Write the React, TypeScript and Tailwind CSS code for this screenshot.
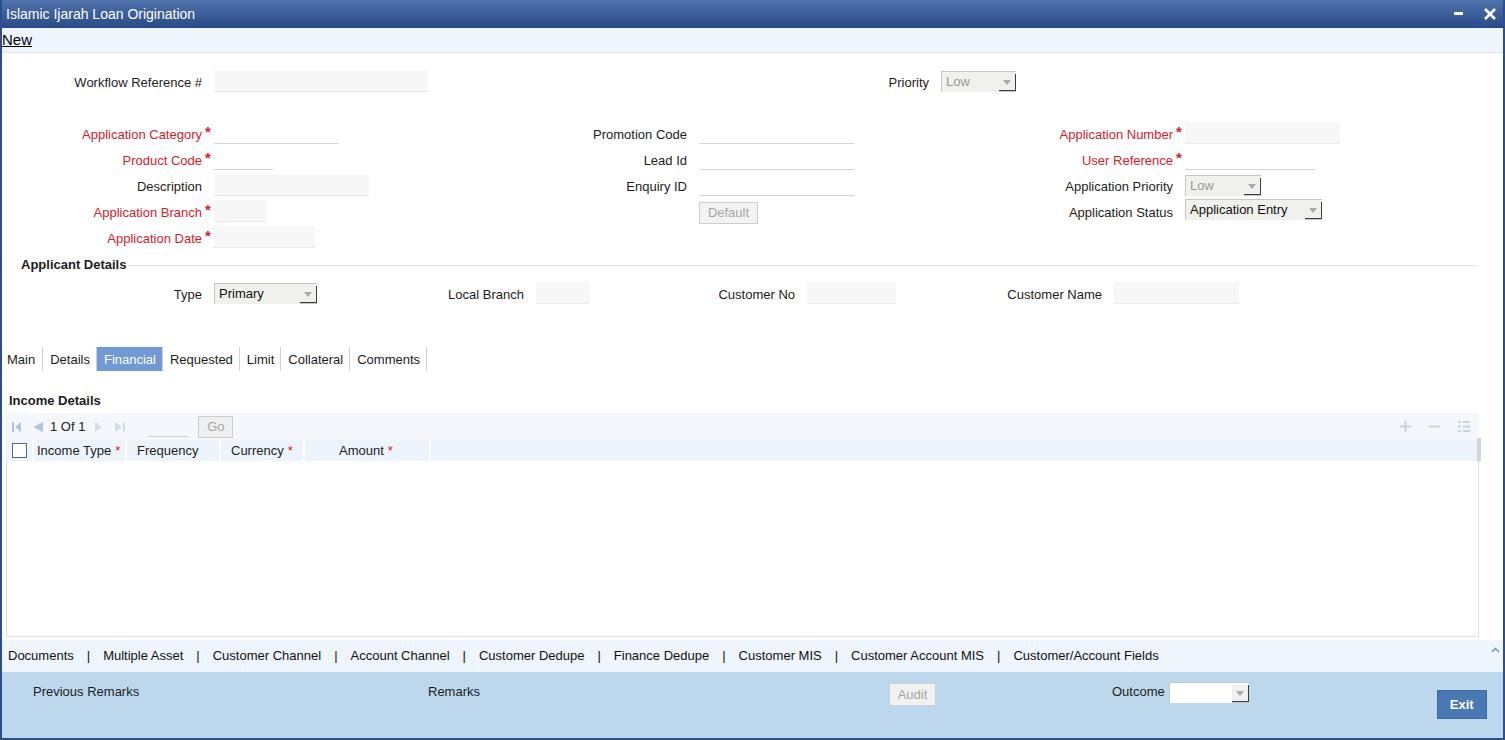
import React from 'react';

const FONT = { fontFamily: '"Liberation Sans", Arial, sans-serif' };

function Req() {
  return (
    <span className="absolute -top-[3px] left-full ml-[3px] text-[15px] font-bold leading-[16px] text-[#d3222c]">
      *
    </span>
  );
}

function Label({ text, req, red, className }: { text: string; req?: boolean; red?: boolean; className?: string }) {
  return (
    <div className={`flex h-[22px] items-end justify-end pb-[1px] pr-3 ${className ?? ''}`}>
      <span className={`relative leading-[16px] ${red ? 'text-[#d3222c]' : 'text-[#1c1c1c]'}`}>
        {text}
        {req && <Req />}
      </span>
    </div>
  );
}

function Field({ className, filled }: { className: string; filled?: boolean }) {
  return (
    <div
      className={`h-[22px] border-b ${
        filled ? 'border-[#e9e9e9] bg-[#f7f7f7]' : 'border-[#d4d4d4] bg-white'
      } ${className}`}
    />
  );
}

function Arrow() {
  return (
    <div className="flex h-[17px] w-[17px] items-center justify-center border-b border-r border-[#3c3c3c] bg-[#f0f0ec]">
      <svg width="8" height="5" viewBox="0 0 8 5">
        <polygon points="0,0 8,0 4,5" fill="#a9a9a9" />
      </svg>
    </div>
  );
}

function Select({ value, className, disabled, white }: { value?: string; className: string; disabled?: boolean; white?: boolean }) {
  return (
    <div
      className={`flex h-[21px] items-center justify-between border-l border-t border-[#c6c6c6] pl-[4px] ${
        white ? 'bg-white' : 'bg-[#f0f0ec]'
      } ${className}`}
    >
      <span className={`leading-[16px] ${disabled ? 'text-[#9a9a9a]' : 'text-[#111]'}`}>{value}</span>
      <div className="self-end border-b border-[#c6c6c6]">
        <Arrow />
      </div>
    </div>
  );
}

function Tab({ label, active, first }: { label: string; active?: boolean; first?: boolean }) {
  return (
    <div
      className={`flex h-[24px] items-center border-r border-[#d2d2d2] pt-[1px] ${first ? 'pl-[5px] pr-[7px]' : 'pl-[7px] pr-[6px]'} ${
        active ? 'bg-[#7099d5] text-white' : 'text-[#1c1c1c]'
      }`}
    >
      {label}
    </div>
  );
}

const links = [
  'Documents',
  'Multiple Asset',
  'Customer Channel',
  'Account Channel',
  'Customer Dedupe',
  'Finance Dedupe',
  'Customer MIS',
  'Customer Account MIS',
  'Customer/Account Fields',
];

export default function App() {
  return (
    <div
      className="flex h-[740px] w-full flex-col overflow-hidden border-x-2 border-b-2 border-[#2c4e8a] bg-white text-[13px]"
      style={FONT}
    >
      {/* Title bar */}
      <div className="-mx-[2px] flex h-[28px] shrink-0 items-center justify-between bg-linear-to-b from-[#5073ac] to-[#284b88] pl-[6px] pr-[9px]">
        <span className="text-[14px] text-white">Islamic Ijarah Loan Origination</span>
        <div className="flex items-center gap-[21px]">
          <svg width="9" height="4" viewBox="0 0 9 4">
            <rect x="0" y="0" width="9" height="3" fill="white" />
          </svg>
          <svg width="12" height="12" viewBox="0 0 12 12">
            <path d="M1 1 L11 11 M11 1 L1 11" stroke="white" strokeWidth="2.6" />
          </svg>
        </div>
      </div>

      {/* Toolbar */}
      <div className="flex h-[25px] shrink-0 items-center border-b border-[#dde4ee] bg-[#eef5fd]">
        <span className="text-[15px] leading-[18px] text-black underline">New</span>
      </div>

      {/* Form */}
      <div className="flex h-[584px] shrink-0 flex-col">
        <div className="mt-[17px] flex h-[22px] items-start">
          <Label text="Workflow Reference #" className="w-[212px]" />
          <Field filled className="w-[214px]" />
          <Label text="Priority" className="w-[513px]" />
          <Select value="Low" disabled className="mt-[1px] w-[75px]" />
        </div>

        <div className="mt-[30px] grid auto-rows-[22px] grid-cols-[212px_266px_219px_261px_225px_1fr] gap-y-[4px]">
          <Label text="Application Category" red req />
          <Field className="w-[125px]" />
          <Label text="Promotion Code" />
          <Field className="w-[155px]" />
          <Label text="Application Number" red req />
          <Field filled className="w-[155px]" />

          <Label text="Product Code" red req />
          <Field className="w-[59px]" />
          <Label text="Lead Id" />
          <Field className="w-[155px]" />
          <Label text="User Reference" red req />
          <Field className="w-[131px]" />

          <Label text="Description" />
          <Field filled className="w-[155px]" />
          <Label text="Enquiry ID" />
          <Field className="w-[155px]" />
          <Label text="Application Priority" />
          <Select value="Low" disabled className="mt-[1px] w-[76px]" />

          <Label text="Application Branch" red req />
          <Field filled className="w-[53px]" />
          <div />
          <div className="mt-[2px] flex h-[22px] w-[59px] items-center justify-center border border-[#cdcdcd] bg-[#f3f3f3] text-[#a6a6a6]">
            Default
          </div>
          <Label text="Application Status" />
          <Select value="Application Entry" className="-mt-[1px] w-[137px]" />

          <Label text="Application Date" red req />
          <Field filled className="w-[101px]" />
        </div>

        {/* Applicant details */}
        <div className="mt-[8px] flex h-[18px] items-center">
          <span className="ml-[19px] font-bold text-[#1c1c1c]">Applicant Details</span>
          <div className="ml-[2px] mr-[26px] h-px flex-1 bg-[#e2e2e2]" />
        </div>
        <div className="mt-[8px] flex h-[22px] items-start">
          <Label text="Type" className="w-[212px]" />
          <Select value="Primary" className="mt-[1px] w-[103px]" />
          <Label text="Local Branch" className="w-[219px]" />
          <Field filled className="w-[53px]" />
          <Label text="Customer No" className="w-[218px]" />
          <Field filled className="w-[89px]" />
          <Label text="Customer Name" className="w-[218px]" />
          <Field filled className="w-[125px]" />
        </div>

        {/* Tabs */}
        <div className="mt-[43px] flex h-[24px]">
          <Tab label="Main" first />
          <Tab label="Details" />
          <Tab label="Financial" active />
          <Tab label="Requested" />
          <Tab label="Limit" />
          <Tab label="Collateral" />
          <Tab label="Comments" />
        </div>

        <div className="mt-[22px] flex h-[16px] items-center pl-[7px] font-bold text-[#1c1c1c]">Income Details</div>

        {/* Grid */}
        <div className="relative ml-[4px] mt-[4px] w-[1473px]">
          <div className="flex h-[27px] items-center bg-[#f4f7fc]">
            <svg className="ml-[6px]" width="9" height="10" viewBox="0 0 9 10">
              <rect x="0" y="0" width="2" height="10" fill="#b3c3db" />
              <polygon points="9,0 3,5 9,10" fill="#b3c3db" />
            </svg>
            <svg className="ml-[12px]" width="10" height="10" viewBox="0 0 10 10">
              <polygon points="10,0 0,5 10,10" fill="#b3c3db" />
            </svg>
            <span className="ml-[7px] text-[#222]">1 Of 1</span>
            <svg className="ml-[10px]" width="7" height="10" viewBox="0 0 7 10">
              <polygon points="0,0 7,5 0,10" fill="#d3ddeb" />
            </svg>
            <svg className="ml-[13px]" width="10" height="10" viewBox="0 0 10 10">
              <polygon points="0,0 7,5 0,10" fill="#d3ddeb" />
              <rect x="8" y="0" width="2" height="10" fill="#d3ddeb" />
            </svg>
            <div className="ml-[23px] h-[20px] w-[41px] border-b border-[#d2d2d2]" />
            <div className="ml-[9px] flex h-[22px] w-[35px] items-center justify-center border border-[#cdcdcd] bg-[#efefef] text-[#a6a6a6]">
              Go
            </div>
            <div className="ml-auto mr-[9px] flex items-center gap-[18px]">
              <svg width="11" height="11" viewBox="0 0 11 11">
                <path d="M5.5 0 V11 M0 5.5 H11" stroke="#c7d3e5" strokeWidth="2" />
              </svg>
              <svg width="11" height="11" viewBox="0 0 11 11">
                <path d="M0 5.5 H11" stroke="#c7d3e5" strokeWidth="2" />
              </svg>
              <svg width="12" height="11" viewBox="0 0 12 11">
                <rect x="0" y="0" width="3" height="2" fill="#c7d3e5" />
                <rect x="5" y="0" width="7" height="2" fill="#c7d3e5" />
                <rect x="0" y="4.5" width="3" height="2" fill="#c7d3e5" />
                <rect x="5" y="4.5" width="7" height="2" fill="#c7d3e5" />
                <rect x="0" y="9" width="3" height="2" fill="#c7d3e5" />
                <rect x="5" y="9" width="7" height="2" fill="#c7d3e5" />
              </svg>
            </div>
          </div>

          <div className="flex h-[21px] items-center bg-[#eef4fc] text-[#1c1c1c]">
            <div className="flex h-full w-[28px] items-center justify-center border-r-2 border-white">
              <div className="h-[15px] w-[15px] border border-[#56677a] bg-white" />
            </div>
            <div className="flex h-full w-[93px] items-center border-r-2 border-white pl-[3px]">
              Income Type <span className="ml-[4px] text-[#d3222c]">*</span>
            </div>
            <div className="flex h-full w-[94px] items-center border-r-2 border-white pl-[10px]">Frequency</div>
            <div className="flex h-full w-[84px] items-center border-r-2 border-white pl-[10px]">
              Currency <span className="ml-[4px] text-[#d3222c]">*</span>
            </div>
            <div className="flex h-full w-[126px] items-center border-r-2 border-white pl-[34px]">
              Amount <span className="ml-[4px] text-[#d3222c]">*</span>
            </div>
          </div>
          <div className="absolute right-[-2px] top-[25px] h-[23px] w-[4px] bg-[#cfd6dd]" />

          <div className="h-[176px] border-x border-b border-[#d9dfe6] bg-white" />
        </div>
      </div>

      {/* Links bar */}
      <div className="mt-[3px] flex h-[32px] shrink-0 items-center bg-[#eef5fd] pl-[6px] text-[#111]">
        {links.map((l, i) => (
          <React.Fragment key={l}>
            {i > 0 && <span className="mx-[13px]">|</span>}
            <span>{l}</span>
          </React.Fragment>
        ))}
        <svg className="ml-auto mr-[3px] -mt-[12px]" width="9" height="6" viewBox="0 0 9 6">
          <path d="M1 5 L4.5 1.5 L8 5" stroke="#6d8fbf" strokeWidth="1.4" fill="none" />
        </svg>
      </div>

      {/* Bottom panel */}
      <div className="flex h-[66px] shrink-0 items-start bg-[#bdd8ec] text-[#1c1c1c]">
        <span className="ml-[31px] mt-[12px] w-[395px] leading-[16px]">Previous Remarks</span>
        <span className="mt-[12px] w-[461px] leading-[16px]">Remarks</span>
        <div className="mt-[11px] flex h-[23px] w-[47px] items-center justify-center border border-[#cfcfcf] bg-[#f1f1f1] text-[#a6a6a6]">
          Audit
        </div>
        <span className="ml-[176px] mt-[12px] leading-[16px]">Outcome</span>
        <Select white className="ml-[4px] mt-[10px] w-[80px]" />
        <div className="ml-[188px] mt-[18px] flex h-[29px] w-[50px] items-center justify-center border border-[#3f6aa0] bg-[#4a78b2] font-bold text-white">
          Exit
        </div>
      </div>
    </div>
  );
}
